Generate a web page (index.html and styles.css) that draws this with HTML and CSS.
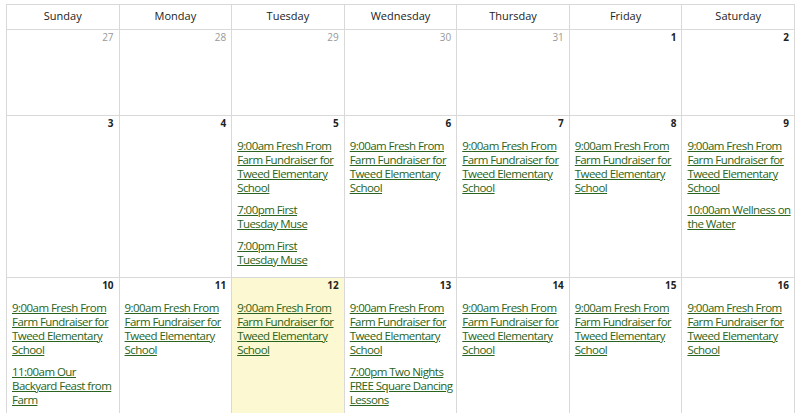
FILE: index.html
```html
<!DOCTYPE html>
<html>
<head>
<meta charset="utf-8">
<link rel="stylesheet" href="styles.css">
</head>
<body>
<div class="wrap">
<table class="cal">
  <thead>
    <tr class="head">
      <th>Sunday</th><th>Monday</th><th>Tuesday</th><th>Wednesday</th><th>Thursday</th><th>Friday</th><th>Saturday</th>
    </tr>
  </thead>
  <tbody>
    <tr class="w1">
      <td><div class="num other">27</div></td>
      <td><div class="num other">28</div></td>
      <td><div class="num other">29</div></td>
      <td><div class="num other">30</div></td>
      <td><div class="num other">31</div></td>
      <td><div class="num">1</div></td>
      <td><div class="num">2</div></td>
    </tr>
    <tr class="w2">
      <td><div class="num">3</div></td>
      <td><div class="num">4</div></td>
      <td><div class="num">5</div>
        <a class="ev" href="#">9:00am Fresh From Farm Fundraiser for Tweed Elementary School</a>
        <a class="ev" href="#">7:00pm First<br>Tuesday Muse</a>
        <a class="ev" href="#">7:00pm First<br>Tuesday Muse</a>
      </td>
      <td><div class="num">6</div>
        <a class="ev" href="#">9:00am Fresh From Farm Fundraiser for Tweed Elementary School</a>
      </td>
      <td><div class="num">7</div>
        <a class="ev" href="#">9:00am Fresh From Farm Fundraiser for Tweed Elementary School</a>
      </td>
      <td><div class="num">8</div>
        <a class="ev" href="#">9:00am Fresh From Farm Fundraiser for Tweed Elementary School</a>
      </td>
      <td><div class="num">9</div>
        <a class="ev" href="#">9:00am Fresh From Farm Fundraiser for Tweed Elementary School</a>
        <a class="ev" href="#">10:00am Wellness on the Water</a>
      </td>
    </tr>
    <tr class="w3">
      <td><div class="num">10</div>
        <a class="ev" href="#">9:00am Fresh From Farm Fundraiser for Tweed Elementary School</a>
        <a class="ev" href="#">11:00am Our Backyard Feast from Farm</a>
      </td>
      <td><div class="num">11</div>
        <a class="ev" href="#">9:00am Fresh From Farm Fundraiser for Tweed Elementary School</a>
      </td>
      <td class="today"><div class="num">12</div>
        <a class="ev" href="#">9:00am Fresh From Farm Fundraiser for Tweed Elementary School</a>
      </td>
      <td><div class="num">13</div>
        <a class="ev" href="#">9:00am Fresh From Farm Fundraiser for Tweed Elementary School</a>
        <a class="ev" href="#">7:00pm Two Nights FREE Square Dancing Lessons</a>
      </td>
      <td><div class="num">14</div>
        <a class="ev" href="#">9:00am Fresh From Farm Fundraiser for Tweed Elementary School</a>
      </td>
      <td><div class="num">15</div>
        <a class="ev" href="#">9:00am Fresh From Farm Fundraiser for Tweed Elementary School</a>
      </td>
      <td><div class="num">16</div>
        <a class="ev" href="#">9:00am Fresh From Farm Fundraiser for Tweed Elementary School</a>
      </td>
    </tr>
  </tbody>
</table>
</div>
</body>
</html>
```

FILE: styles.css
```css
html, body {
  margin: 0;
  padding: 0;
  background: #fff;
}
body {
  font-family: "Open Sans", "Liberation Sans", sans-serif;
  color: #222;
}
.wrap {
  padding: 4px 6px 0 6px;
}
.cal {
  width: 789px;
  border-collapse: collapse;
  table-layout: fixed;
}
.cal th, .cal td {
  border: 1px solid #d9d9d9;
}
.cal th {
  height: 21px;
  font-size: 11px;
  font-weight: normal;
  color: #222;
  text-align: center;
  vertical-align: middle;
  padding: 0 0 3px 0;
}
.cal td {
  vertical-align: top;
  padding: 0 2px 0 5px;
}
.w1 td { height: 85px; }
.w2 td { height: 161px; }
.w3 td { height: 133px; }
.today {
  background: #fcf8d2;
}
.num {
  text-align: right;
  font-size: 10px;
  font-weight: bold;
  color: #222;
  line-height: 14px;
  padding-right: 3px;
  margin-bottom: 9px;
}
.num.other {
  font-weight: normal;
  color: #999;
}
.ev {
  display: block;
  font-size: 11.5px;
  letter-spacing: -0.55px;
  line-height: 14px;
  color: #2a6420;
  text-decoration: underline;
  margin-bottom: 8px;
}
```
